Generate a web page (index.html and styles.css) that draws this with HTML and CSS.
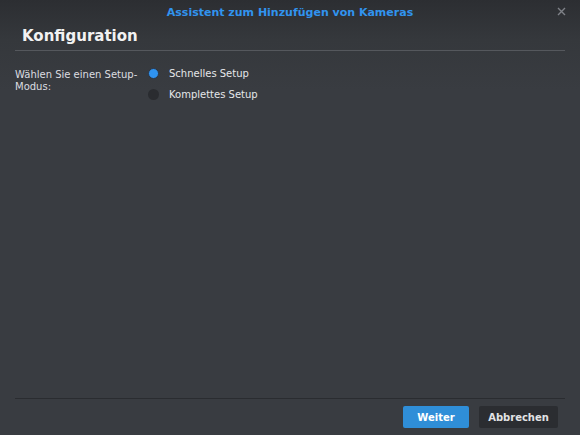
FILE: index.html
```html
<!DOCTYPE html>
<html>
<head>
  <title>Assistent zum Hinzufügen von Kameras</title>
  <link rel="stylesheet" href="styles.css">
</head>
<body>
  <div class="dialog">
    <div class="titlebar">
      <span class="title">Assistent zum Hinzufügen von Kameras</span>
      <svg class="close" width="9" height="9" viewBox="0 0 9 9">
        <path d="M1 1 L8 8 M8 1 L1 8" stroke="#7f8288" stroke-width="1.4" fill="none"/>
      </svg>
    </div>

    <div class="header">
      <h1>Konfiguration</h1>
    </div>

    <div class="content">
      <div class="field">
        <div class="field-label">Wählen Sie einen Setup-Modus:</div>
        <div class="options">
          <label class="radio">
            <span class="dot checked"></span>
            Schnelles Setup
          </label>
          <label class="radio">
            <span class="dot"></span>
            Komplettes Setup
          </label>
        </div>
      </div>
    </div>

    <div class="footer">
      <button class="btn btn-primary">Weiter</button>
      <button class="btn btn-cancel">Abbrechen</button>
    </div>
  </div>
</body>
</html>
```

FILE: styles.css
```css
html, body {
  margin: 0;
  height: 100%;
}

body {
  background: linear-gradient(to bottom, #2c2e32 0px, #35383c 40px, #393c41 90px, #393c41 100%);
  font-family: "DejaVu Sans", Verdana, sans-serif;
  color: #e6e7e9;
}

.dialog {
  display: flex;
  flex-direction: column;
  height: 435px;
}

.titlebar {
  position: relative;
  height: 24px;
  display: flex;
  align-items: center;
  justify-content: center;
}

.title {
  color: #3194ef;
  font-size: 11px;
  font-weight: bold;
}

.close {
  position: absolute;
  right: 14px;
  top: 7px;
}

.header {
  margin: 0 15px;
  padding: 0 0 0 7px;
  border-bottom: 1px solid #55585d;
}

h1 {
  margin: 0;
  padding: 3px 0 5px;
  font-size: 15px;
  line-height: 18px;
  color: #f2f2f2;
}

.content {
  flex: 1;
  padding: 17px 14px 0 15px;
}

.field {
  display: flex;
  font-size: 10px;
  line-height: 12px;
}

.field-label {
  width: 132px;
  padding-top: 1px;
  color: #dcdde0;
}

.options {
  display: flex;
  flex-direction: column;
  gap: 10px;
  margin-left: 1px;
}

.radio {
  display: flex;
  align-items: center;
  gap: 10px;
  color: #e6e7e9;
  line-height: 11px;
}

.dot {
  width: 11px;
  height: 11px;
  border-radius: 50%;
  background: #2a2c30;
  box-sizing: border-box;
}

.dot.checked {
  background: #2f93f0;
  border: 1.5px solid #2a3546;
}

.footer {
  margin: 0 15px;
  border-top: 1px solid #2a2c30;
  height: 36px;
  display: flex;
  justify-content: flex-end;
  align-items: center;
  gap: 10px;
  padding-right: 7px;
}

.btn {
  height: 22px;
  padding: 0;
  border: none;
  border-radius: 2px;
  background: #2b2d31;
  color: #e2e3e5;
  font-family: "DejaVu Sans", Verdana, sans-serif;
  font-size: 10px;
  font-weight: bold;
}

.btn-primary {
  width: 66px;
  background: #2f8ed8;
  color: #ffffff;
}

.btn-cancel {
  width: 79px;
}
```
